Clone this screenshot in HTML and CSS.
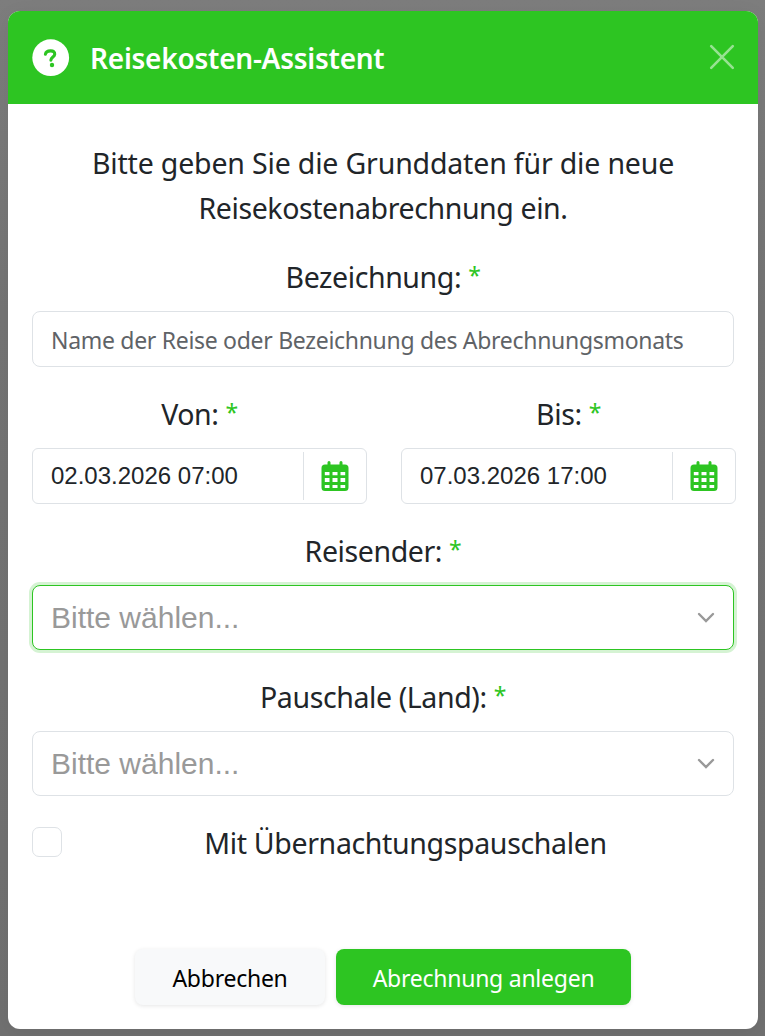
FILE: index.html
```html
<!DOCTYPE html>
<html lang="de">

<head>
	<meta charset="UTF-8">
	<title>Reisekosten-Assistent</title>
	<link rel="stylesheet" href="styles.css">
</head>

<body>
	<section class="modal">
		<header class="modal-header">
			<svg class="icon-help" viewBox="0 0 38 38">
				<circle cx="18.700" cy="18.700" r="18.400" fill="#fff" />
				<path d="M13.400 15.200C13.900 12.800 15.600 12 18.500 11.900C21.500 11.800 22.900 13.200 22.700 15.400C22.400 18.200 19.200 18 18.900 21.200" fill="none" stroke="#2dc522" stroke-width="3.100" stroke-linecap="round" />
				<circle cx="20" cy="26" r="2.200" fill="#2dc522" />
			</svg>
			<h1>Reisekosten-Assistent</h1>
			<button class="close" aria-label="Schließen">
				<svg viewBox="0 0 24 24"><path d="M1.200 1.200l21.600 21.600M22.800 1.200L1.200 22.800" /></svg>
			</button>
		</header>
		<main class="modal-body">
			<p class="intro">Bitte geben Sie die Grunddaten für die neue<br><span class="intro-end">Reisekostenabrechnung ein.</span></p>

			<label for="name">Bezeichnung: <b>*</b></label>
			<input class="field" id="name" type="text" placeholder="Name der Reise oder Bezeichnung des Abrechnungsmonats">

			<div class="dates">
				<div>
					<label>Von: <b>*</b></label>
					<div class="field date">
						<span class="date-value">02.03.2026 07:00</span>
						<span class="date-button">
							<svg class="calendar" viewBox="0 0 27 30"><path fill-rule="evenodd" d="M6 1.500a1.500 1.500 0 0 1 3 0V3.500h9V1.500a1.500 1.500 0 0 1 3 0V3.500h2.500A3.500 3.500 0 0 1 27 7v19.500a3.500 3.500 0 0 1-3.500 3.500h-20A3.500 3.500 0 0 1 0 26.500V7a3.500 3.500 0 0 1 3.500-3.500H6zM3.300 11v3.300h4.700V11zM11 11v3.300h5V11zM19 11v3.300h4.700V11zM3.300 17v4h4.700v-4zM11 17v4h5v-4zM19 17v4h4.700v-4zM3.300 24v3h4.700v-3zM11 24v3h5v-3zM19 24v3h4.700v-3z" /></svg>
						</span>
					</div>
				</div>
				<div>
					<label>Bis: <b>*</b></label>
					<div class="field date">
						<span class="date-value">07.03.2026 17:00</span>
						<span class="date-button">
							<svg class="calendar" viewBox="0 0 27 30"><path fill-rule="evenodd" d="M6 1.500a1.500 1.500 0 0 1 3 0V3.500h9V1.500a1.500 1.500 0 0 1 3 0V3.500h2.500A3.500 3.500 0 0 1 27 7v19.500a3.500 3.500 0 0 1-3.500 3.500h-20A3.500 3.500 0 0 1 0 26.500V7a3.500 3.500 0 0 1 3.500-3.500H6zM3.300 11v3.300h4.700V11zM11 11v3.300h5V11zM19 11v3.300h4.700V11zM3.300 17v4h4.700v-4zM11 17v4h5v-4zM19 17v4h4.700v-4zM3.300 24v3h4.700v-3zM11 24v3h5v-3zM19 24v3h4.700v-3z" /></svg>
						</span>
					</div>
				</div>
			</div>

			<label>Reisender: <b>*</b></label>
			<div class="field select active">
				<span>Bitte wählen...</span>
				<svg class="chevron" viewBox="0 0 18 11"><path d="M2 2l7 7 7-7" /></svg>
			</div>

			<label>Pauschale (Land): <b>*</b></label>
			<div class="field select">
				<span>Bitte wählen...</span>
				<svg class="chevron" viewBox="0 0 18 11"><path d="M2 2l7 7 7-7" /></svg>
			</div>

			<div class="check">
				<input type="checkbox" id="nacht">
				<label for="nacht">Mit Übernachtungspauschalen</label>
			</div>
		</main>
		<footer class="modal-footer">
			<button class="btn btn-light">Abbrechen</button>
			<button class="btn btn-green">Abrechnung anlegen</button>
		</footer>
	</section>
</body>

</html>
```
FILE: styles.css
```css
* {
	box-sizing: border-box;
}

body {
	margin: 0;
	padding: 11px 7px 7px 8px;
	height: 1036px;
	background: linear-gradient(#7d7d7d, #747474 30%, #707070);
	font-family: "Noto Sans", "Open Sans", sans-serif;
	font-size: 28.500px;
	line-height: 45px;
	color: #212529;
	overflow: hidden;
}

.modal {
	width: 750px;
	height: 1018px;
	background-color: white;
	border-radius: 12px;
	overflow: hidden;
	box-shadow: 0 4px 20px rgba(0, 0, 0, 0.06);
	display: flex;
	flex-direction: column;
}

.modal-header {
	height: 93px;
	padding: 0 24px;
	background-color: #2dc522;
	color: white;
	display: flex;
	align-items: center;
}

.icon-help {
	width: 38px;
	height: 38px;
}

h1 {
	margin: 2px 0 0 20px;
	font-size: 28px;
	font-weight: 600;
	letter-spacing: -0.250px;
}

button {
	font-family: inherit;
	border: 0;
}

.close {
	margin: 0 0 2px auto;
	padding: 0;
	width: 24px;
	height: 24px;
	background: none;
}

.close svg {
	display: block;
	overflow: visible;
	stroke: rgba(255, 255, 255, 0.5);
	stroke-width: 2.600;
	stroke-linecap: round;
}

.modal-body {
	padding: 37px 24px 0;
	flex: 1;
}

.intro {
	margin: 0 0 24px;
	text-align: center;
	letter-spacing: -0.170px;
}

.intro-end {
	letter-spacing: -0.400px;
}

label {
	display: block;
	height: 45px;
	margin-bottom: 11px;
	text-align: center;
	letter-spacing: -0.400px;
}

label b {
	font-size: 23px;
	line-height: 1;
	font-weight: normal;
	vertical-align: 4px;
	color: #2dc522;
}

.field {
	display: flex;
	align-items: center;
	width: 702px;
	height: 56px;
	margin-bottom: 25px;
	padding: 0 18px;
	border: 1px solid #dee2e6;
	border-radius: 8px;
	background-color: white;
	font-family: inherit;
	font-size: 23px;
}

input.field {
	padding-top: 1px;
	letter-spacing: -0.300px;
}

.field::placeholder {
	color: #5f6367;
	opacity: 1;
}

.dates {
	display: grid;
	grid-template-columns: 335px 335px;
	gap: 34px;
}

.field.date {
	width: 335px;
	padding-right: 0;
	border-radius: 6px;
	font-family: "Liberation Sans", Arial, sans-serif;
	font-size: 24px;
}

.date-value {
	padding-bottom: 2px;
}

.date-button {
	display: flex;
	align-items: center;
	justify-content: center;
	width: 63px;
	height: 48px;
	margin-left: auto;
	border-left: 1px solid #dee2e6;
}

.calendar {
	width: 28px;
	height: 30px;
	fill: #2dc522;
}

.field.select {
	height: 65px;
	justify-content: space-between;
	font-family: "Liberation Sans", Arial, sans-serif;
	font-size: 30px;
	color: #999;
}

.field.active {
	border-color: #2dc522;
	box-shadow: 0 0 0 3px #d5f3d3;
}

.chevron {
	width: 18px;
	height: 11px;
	fill: none;
	stroke: #999;
	stroke-width: 2.400;
	stroke-linecap: round;
}

.check {
	display: flex;
}

.check input {
	appearance: none;
	width: 30px;
	height: 30px;
	margin: 6px 0 0;
	border: 1px solid #dee2e6;
	border-radius: 7px;
}

.check label {
	flex: 1;
	margin: 0 0 0 15px;
	letter-spacing: -0.350px;
}

.modal-footer {
	display: flex;
	justify-content: center;
	gap: 11px;
	padding-bottom: 24px;
}

.btn {
	height: 56px;
	padding: 2px 0 0;
	border-radius: 8px;
	font-size: 23px;
	letter-spacing: -0.250px;
	box-shadow: 0 1px 4px rgba(0, 0, 0, 0.1);
}

.btn-light {
	width: 190px;
	background-color: #f8f9fa;
	color: black;
}

.btn-green {
	width: 295px;
	background-color: #2dc522;
	color: white;
}
```
